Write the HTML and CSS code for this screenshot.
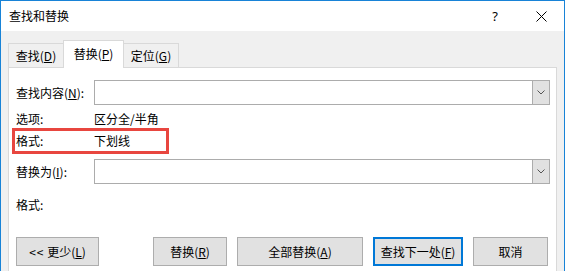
FILE: index.html
```html
<!DOCTYPE html>
<html lang="zh-CN">
<head>
<meta charset="utf-8">
<title>查找和替换</title>
<link rel="stylesheet" href="styles.css">
</head>
<body>
<div class="window">
  <div class="titlebar">
    <span class="title">查找和替换</span>
    <span class="help">?</span>
    <span class="close">
      <svg width="11" height="11" viewBox="0 0 11 11"><path d="M0.5 0.5 L10.5 10.5 M10.5 0.5 L0.5 10.5" stroke="#000" stroke-width="1" fill="none"/></svg>
    </span>
  </div>
  <div class="body">
    <div class="tabs">
      <div class="tab">查找(<u>D</u>)</div>
      <div class="tab active">替换(<u>P</u>)</div>
      <div class="tab">定位(<u>G</u>)</div>
    </div>
    <div class="panel">
      <div class="row field">
        <span class="label">查找内容(<u>N</u>):</span>
        <div class="combo">
          <div class="combo-text"></div>
          <div class="combo-btn"><svg width="8" height="5" viewBox="0 0 8 5"><path d="M0.5 0.5 L4 4 L7.5 0.5" stroke="#555" stroke-width="1" fill="none"/></svg></div>
        </div>
      </div>
      <div class="row text">
        <span class="label">选项:</span>
        <span class="value">区分全/半角</span>
      </div>
      <div class="row text highlighted">
        <span class="label">格式:</span>
        <span class="value">下划线</span>
      </div>
      <div class="row field gap-replace">
        <span class="label">替换为(<u>I</u>):</span>
        <div class="combo">
          <div class="combo-text"></div>
          <div class="combo-btn"><svg width="8" height="5" viewBox="0 0 8 5"><path d="M0.5 0.5 L4 4 L7.5 0.5" stroke="#555" stroke-width="1" fill="none"/></svg></div>
        </div>
      </div>
      <div class="row text gap-format">
        <span class="label">格式:</span>
        <span class="value"></span>
      </div>
      <div class="buttons">
        <button class="btn btn-less"><span class="arrows">&lt;&lt;</span> 更少(<u>L</u>)</button>
        <button class="btn btn-replace">替换(<u>R</u>)</button>
        <button class="btn btn-all">全部替换(<u>A</u>)</button>
        <button class="btn btn-next">查找下一处(<u>F</u>)</button>
        <button class="btn btn-cancel">取消</button>
      </div>
    </div>
  </div>
</div>
</body>
</html>
```
FILE: styles.css
```css
*, *::before, *::after { box-sizing: border-box; }
html, body { margin: 0; padding: 0; }
body {
  font-family: "Noto Sans CJK SC", "Noto Sans", sans-serif;
  font-size: 12px;
  color: #000;
  background: #fff;
}
u { text-decoration: underline; text-underline-offset: 1px; }

.window {
  width: 565px;
  height: 271px;
  border: 1px solid #1883d7;
  border-bottom: none;
  overflow: hidden;
  background: #f0f0f0;
}

.titlebar {
  height: 30px;
  background: #fff;
  display: flex;
  align-items: center;
  padding-left: 8px;
  line-height: 16px;
}
.title { flex: 1; font-size: 12px; }
.help {
  width: 14px;
  text-align: center;
  font-family: "Noto Sans", sans-serif;
  font-size: 13px;
  margin-right: 34px;
}
.close {
  display: flex;
  width: 11px;
  height: 11px;
  margin-right: 17px;
}

.body {
  padding: 9px 0 0 7px;
}

.tabs {
  display: flex;
  align-items: flex-end;
  height: 27px;
  position: relative;
  z-index: 1;
}
.tab {
  width: 56px;
  height: 24px;
  border: 1px solid #d9d9d9;
  border-bottom: none;
  background: #f0f0f0;
  display: flex;
  align-items: center;
  justify-content: center;
  line-height: 16px;
  padding-top: 1px;
}
.tab + .tab { margin-left: -1px; }
.tab.active {
  width: 61px;
  height: 28px;
  margin-bottom: -1px;
  background: #fff;
  padding-bottom: 2px;
  position: relative;
}

.panel {
  width: 549px;
  height: 220px;
  border: 1px solid #d9d9d9;
  background: #fff;
  padding: 12px 6px 0 7px;
}

.row {
  display: flex;
  align-items: center;
  line-height: 16px;
}
.label { width: 78px; flex: none; }
.row.text { height: 22px; margin-top: 3px; }
.row.text + .row.text { margin-top: 0; }
.row.field { height: 25px; }
.gap-replace { margin-top: 7px; }
.row.gap-format { margin-top: 10px; }

.highlighted { position: relative; }
.highlighted::after {
  content: "";
  position: absolute;
  left: -4px;
  top: -2px;
  width: 157px;
  height: 26px;
  border: 3px solid #e8463f;
}

.combo {
  flex: 1;
  height: 25px;
  border: 1px solid #acacac;
  display: flex;
  background: #fff;
}
.combo-text { flex: 1; }
.combo-btn {
  width: 17px;
  background: #e1e1e1;
  border-left: 1px solid #acacac;
  display: flex;
  align-items: center;
  justify-content: center;
}

.buttons {
  display: flex;
  gap: 10px;
  margin-top: 21px;
}
.btn {
  height: 29px;
  border: 1px solid #adadad;
  background: #e1e1e1;
  font-family: "Noto Sans CJK SC", "Noto Sans", sans-serif;
  font-size: 12px;
  color: #000;
  padding: 0;
  line-height: 16px;
}
.arrows { letter-spacing: 1px; }
.btn-less { width: 83px; margin-right: 44px; }
.btn-replace { width: 74px; }
.btn-all { width: 126px; }
.btn-next { width: 90px; border: 2px solid #0078d7; }
.btn-cancel { width: 75px; }
```
